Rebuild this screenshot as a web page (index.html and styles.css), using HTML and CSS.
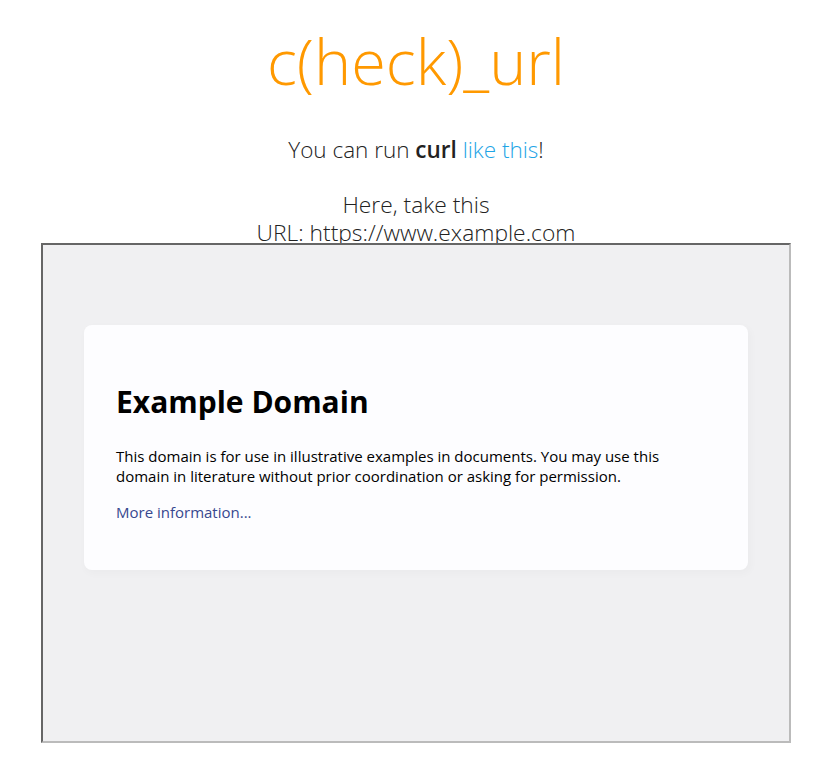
FILE: index.html
```html
<!DOCTYPE html>
<html lang="en">
<head>
    <meta charset="UTF-8">
    <meta name="viewport" content="width=device-width, initial-scale=1.0">
    <title>c(heck)_url</title>
    <link rel="stylesheet" href="styles.css">
</head>
<body>
    <div class="page">
        <h1 class="title">c(heck)_url</h1>
        <p class="intro">You can run <b>curl</b> <a href="#">like this</a>!</p>
        <p class="take">Here, take this<br>URL: https://www.example.com</p>
        <div class="frame">
            <div class="example">
                <div class="card">
                    <h2>Example Domain</h2>
                    <p>This domain is for use in illustrative examples in documents. You may use this
                    domain in literature without prior coordination or asking for permission.</p>
                    <p><a href="#">More information...</a></p>
                </div>
            </div>
        </div>
    </div>
</body>
</html>
```

FILE: styles.css
```css
body {
    margin: 0 0 0 12px;
    font-family: "Open Sans", "Noto Sans", sans-serif;
    font-weight: 300;
    color: #222;
    background: white;
}

.page {
    display: flex;
    flex-direction: column;
    align-items: center;
    text-align: center;
}

.title {
    margin: 16px 0 0;
    font-size: 63px;
    font-weight: 300;
    line-height: 90px;
    color: #ff9900;
}

.intro {
    margin: 29px 0 0;
    font-size: 22.5px;
    line-height: 30px;
}

.intro b {
    font-weight: 600;
}

.intro a {
    color: #1fa5e6;
    text-decoration: none;
}

.take {
    margin: 26px 0 -4px;
    font-size: 22.8px;
    line-height: 28px;
}

.frame {
    width: 746px;
    height: 496px;
    border: 2px solid;
    border-color: #666 #bbb #bbb #666;
}

.example {
    height: 100%;
    background: #f0f0f2;
    overflow: hidden;
    text-align: left;
    font-weight: 400;
    color: black;
}

.card {
    width: 600px;
    margin: 80px auto;
    padding: 32px;
    background: #fdfdff;
    border-radius: 8px;
    box-shadow: 2px 3px 7px 2px rgba(0, 0, 0, 0.02);
}

.card h2 {
    margin: 24px 0;
    font-size: 30px;
    font-weight: 700;
    line-height: 41px;
}

.card p {
    margin: 16px 0;
    font-size: 15px;
    line-height: 20px;
}

.card a {
    color: #38488f;
    text-decoration: none;
}
```
